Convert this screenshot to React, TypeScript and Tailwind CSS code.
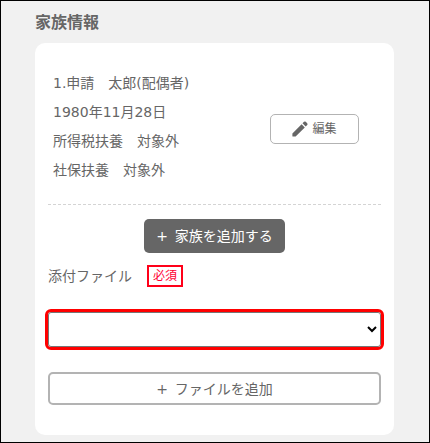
import type { ReactNode } from "react";

const members = [
    {
        id: 1,
        name: "1.申請　太郎(配偶者)",
        birthday: "1980年11月28日",
        tax: "所得税扶養　対象外",
        insurance: "社保扶養　対象外",
    },
];

function PencilIcon() {
    return (
        <svg viewBox="0 0 16 16" className="h-4 w-4 fill-[#666666]" aria-hidden="true">
            <path d="M0.4 12.4 9.6 3.2l3.2 3.2-9.2 9.2H.9q-.5 0-.5-.5z" />
            <path d="M10.5 2.3 12 .8q.9-.8 1.8 0l1.4 1.4q.8.9 0 1.8L13.7 5.5z" />
        </svg>
    );
}

function AddLabel({ children }: { children: ReactNode }) {
    return (
        <span className="flex items-center justify-center gap-[7px]">
            <span aria-hidden="true">+</span>
            <span>{children}</span>
        </span>
    );
}

export default function App() {
    return (
        <main className="min-h-screen border border-black bg-[#f1f1f1] pt-[9px] pr-[35px] pb-[7px] pl-[34px] font-['DejaVu_Sans','Noto_Sans_CJK_JP',sans-serif] text-sm text-[#666666]">
            <h1 className="mb-[7px] text-base leading-[26px] font-bold">家族情報</h1>

            <section className="rounded-[10px] bg-white px-[13px] pt-[26px] pb-[30px]">
                {members.map((member) => (
                    <div
                        key={member.id}
                        className="flex items-center border-b border-dashed border-[#d4d4d4] pb-[19px]"
                    >
                        <div className="w-3/5 pl-[5px] leading-[29px] whitespace-nowrap">
                            <p>{member.name}</p>
                            <p>{member.birthday}</p>
                            <p>{member.tax}</p>
                            <p>{member.insurance}</p>
                        </div>
                        <div className="flex w-2/5 justify-center pt-1">
                            <button
                                type="button"
                                className="flex h-[30px] w-[89px] items-center justify-center gap-1 rounded-[5px] border border-[#b3b3b3] bg-white text-xs"
                            >
                                <PencilIcon />
                                編集
                            </button>
                        </div>
                    </div>
                ))}

                <div className="mt-[14px] flex justify-center">
                    <button
                        type="button"
                        className="h-[34px] rounded-[5px] bg-[#666666] px-3 text-white"
                    >
                        <AddLabel>家族を追加する</AddLabel>
                    </button>
                </div>

                <div className="mt-3 flex items-center gap-[15px]">
                    <label htmlFor="attachment">添付ファイル</label>
                    <span className="border-2 border-[#ff0019] px-1 text-xs leading-[18px] text-[#ff0033]">
                        必須
                    </span>
                </div>

                <select
                    id="attachment"
                    className="mt-[25px] block h-[35px] w-full rounded-[3px] border border-[#767676] bg-white text-black outline-3 outline-[#ff0000]"
                >
                    <option value=""></option>
                </select>

                <button
                    type="button"
                    className="mt-[25px] block h-[33px] w-full rounded-[5px] border-2 border-[#b3b3b3] bg-white"
                >
                    <AddLabel>ファイルを追加</AddLabel>
                </button>
            </section>
        </main>
    );
}
